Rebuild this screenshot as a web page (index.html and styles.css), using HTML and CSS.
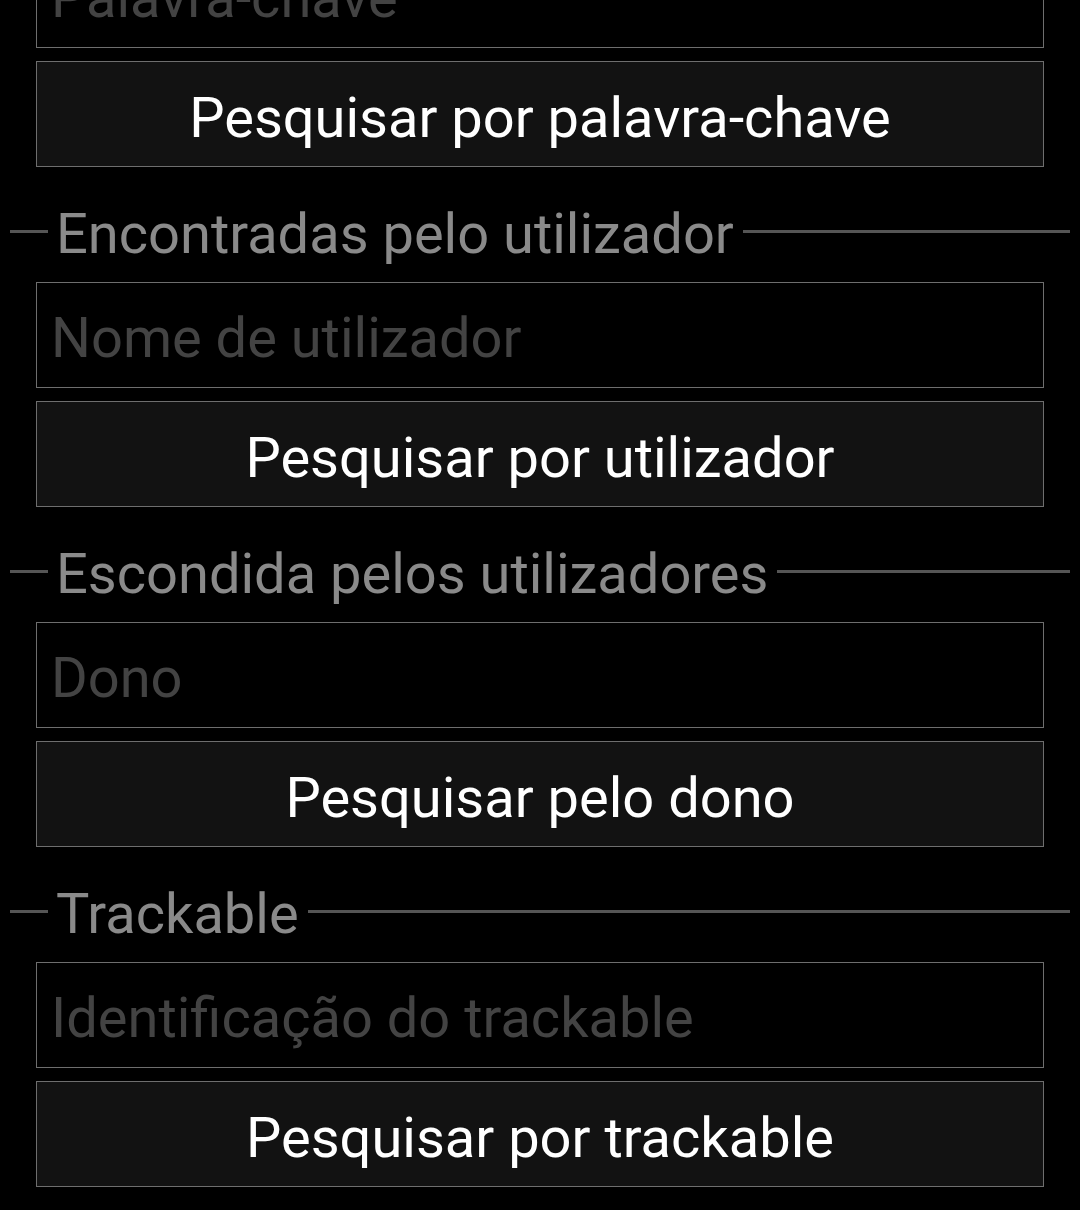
FILE: index.html
```html
<!DOCTYPE html>
<html lang="pt">
<head>
<meta charset="utf-8">
<link rel="stylesheet" href="styles.css">
<title>Pesquisar</title>
</head>
<body>
<main class="page">
  <section class="group first">
    <input class="field" type="text" placeholder="Palavra-chave">
    <button class="action" type="button">Pesquisar por palavra-chave</button>
  </section>
  <section class="group">
    <div class="heading"><span class="rule short"></span><span class="label">Encontradas pelo utilizador</span><span class="rule long"></span></div>
    <input class="field" type="text" placeholder="Nome de utilizador">
    <button class="action" type="button">Pesquisar por utilizador</button>
  </section>
  <section class="group">
    <div class="heading"><span class="rule short"></span><span class="label">Escondida pelos utilizadores</span><span class="rule long"></span></div>
    <input class="field" type="text" placeholder="Dono">
    <button class="action" type="button">Pesquisar pelo dono</button>
  </section>
  <section class="group">
    <div class="heading"><span class="rule short"></span><span class="label">Trackable</span><span class="rule long"></span></div>
    <input class="field" type="text" placeholder="Identificação do trackable">
    <button class="action" type="button">Pesquisar por trackable</button>
  </section>
</main>
</body>
</html>
```

FILE: styles.css
```css
html, body {
  margin: 0;
  padding: 0;
  background: #000;
}
body {
  font-family: Roboto, "Noto Sans", "Liberation Sans", sans-serif;
  overflow: hidden;
}
.page {
  display: flex;
  flex-direction: column;
  margin-top: -58px;
}
.group {
  display: flex;
  flex-direction: column;
}
.heading {
  display: flex;
  align-items: center;
  height: 64px;
  margin: 32px 10px 19px 10px;
}
.rule {
  height: 3px;
  background: #555;
}
.rule.short {
  width: 38px;
  flex: none;
}
.rule.long {
  flex: 1;
}
.label {
  color: #8a8a8a;
  font-size: 56px;
  line-height: 64px;
  padding: 6px 9px 0 8px;
  white-space: nowrap;
}
.field {
  box-sizing: border-box;
  height: 106px;
  margin: 0 36px;
  border: 1px solid #6e6e6e;
  background: #000;
  color: #ddd;
  font-family: inherit;
  font-size: 56px;
  padding: 5px 14px 0 14px;
  outline: none;
}
.field::placeholder {
  color: #434343;
}
.action {
  box-sizing: border-box;
  height: 106px;
  margin: 13px 36px 0 36px;
  border: 1px solid #6e6e6e;
  background: #121212;
  color: #fff;
  font-family: inherit;
  font-size: 56px;
  padding: 7px 0 0 0;
}
```
